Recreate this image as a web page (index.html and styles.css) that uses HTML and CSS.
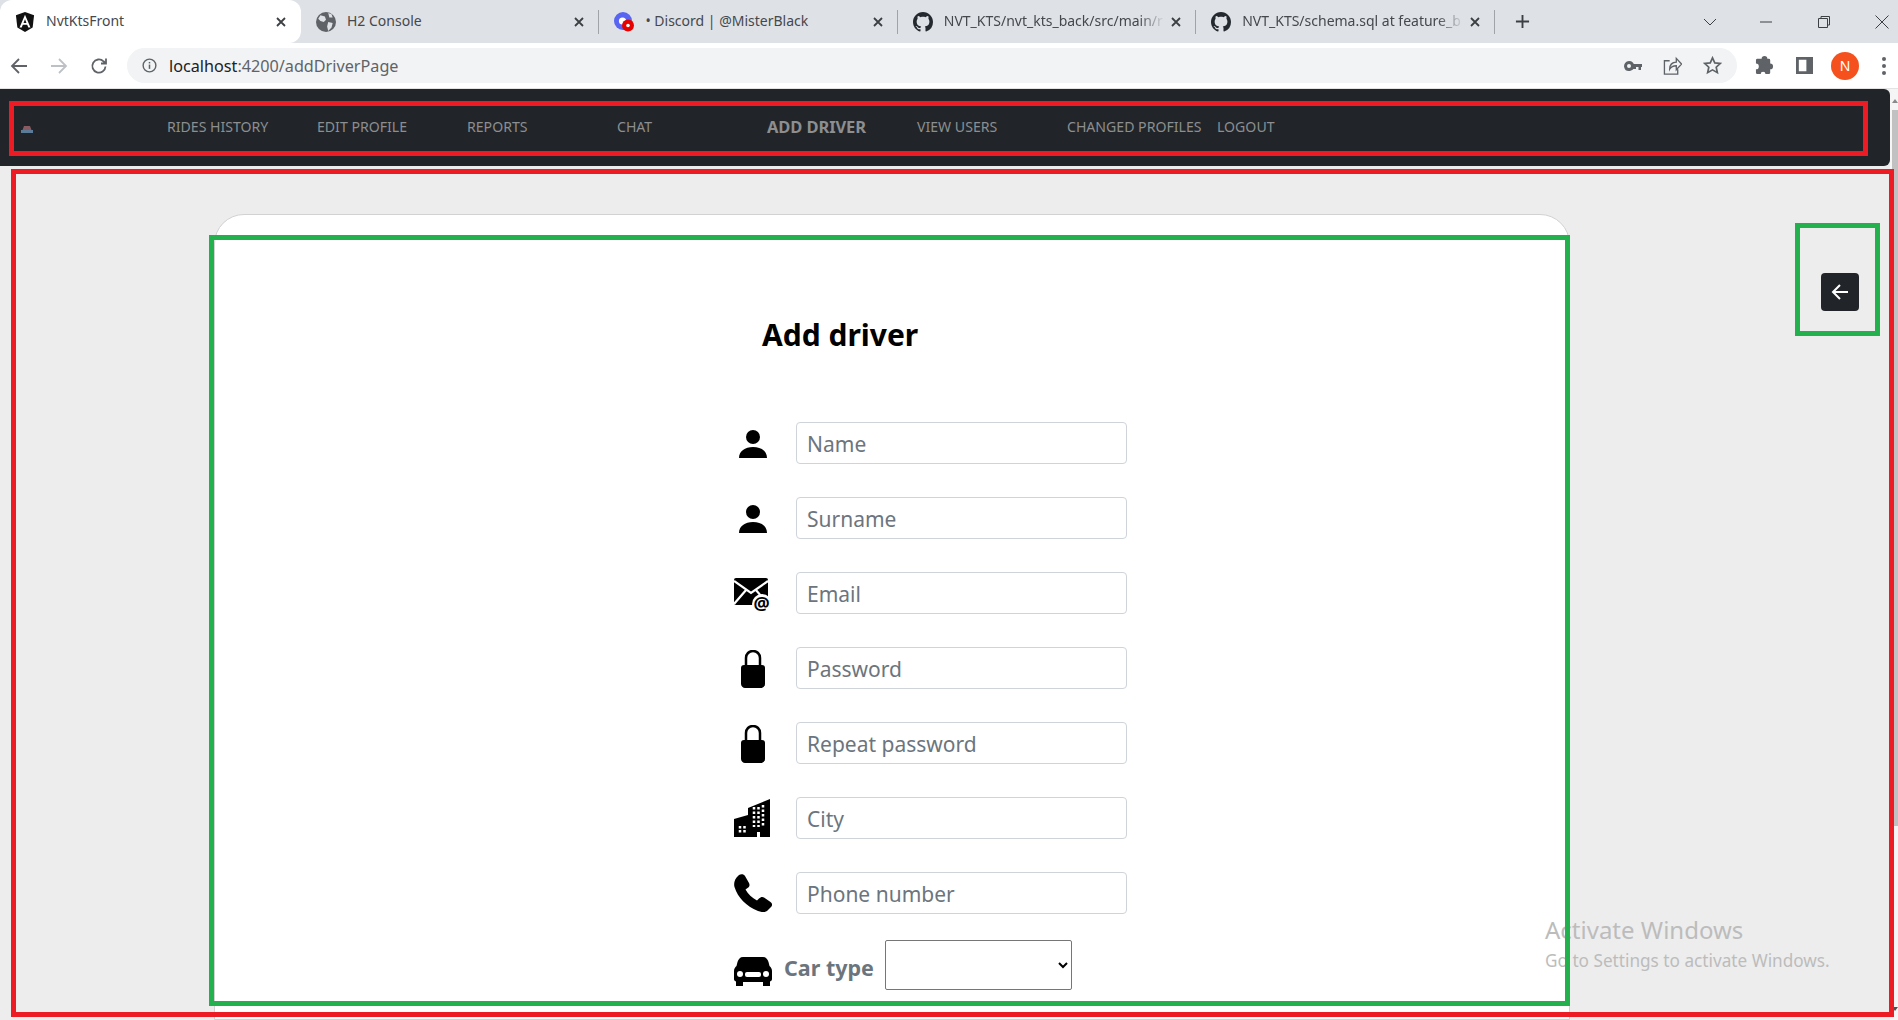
FILE: index.html
```html
<!DOCTYPE html>
<html lang="en">

<head>
    <meta charset="UTF-8">
    <title>NvtKtsFront</title>
    <link rel="stylesheet" href="styles.css">
</head>

<body>
    <!-- Browser chrome -->
    <div class="tabstrip">
        <div class="tab tab-active">
            <svg class="tab-icon" viewBox="0 0 22 22">
                <path fill="#111" d="M11 0 21 3.6 19.4 17 11 22 2.6 17 1 3.6z" />
                <path fill="#fff" d="M11 3 5 17h2.4l1.2-3h4.8l1.2 3H17zM9.4 12 11 8l1.6 4z" />
            </svg>
            <span class="tab-title">NvtKtsFront</span>
            <svg class="tab-close" viewBox="0 0 10 10"><path d="M1 1l8 8M9 1l-8 8" /></svg>
        </div>
        <div class="tab">
            <svg class="tab-icon" viewBox="0 0 18 18">
                <circle cx="9" cy="9" r="9" fill="#5f6368" />
                <path fill="#dee1e6" d="M4 3l4 1 1 3-2 2-3-1-2-2zM11 9l4 1-1 4-3 3-1-4zM11 1l3 1 1 3-3 0z" />
            </svg>
            <span class="tab-title">H2 Console</span>
            <svg class="tab-close" viewBox="0 0 10 10"><path d="M1 1l8 8M9 1l-8 8" /></svg>
        </div>
        <div class="tab">
            <svg class="tab-icon" viewBox="0 0 20 20">
                <circle cx="9" cy="9" r="9" fill="#5865f2" />
                <circle cx="8.5" cy="9" r="3.6" fill="#fff" />
                <circle cx="14" cy="13.5" r="6" fill="#e60000" />
                <circle cx="14" cy="13.5" r="1.8" fill="#fff" />
            </svg>
            <span class="tab-title">• Discord | @MisterBlack</span>
            <svg class="tab-close" viewBox="0 0 10 10"><path d="M1 1l8 8M9 1l-8 8" /></svg>
        </div>
        <div class="tab">
            <svg class="tab-icon" viewBox="0 0 16 16"><use href="#github" /></svg>
            <span class="tab-title tab-fade">NVT_KTS/nvt_kts_back/src/main/r</span>
            <svg class="tab-close" viewBox="0 0 10 10"><path d="M1 1l8 8M9 1l-8 8" /></svg>
        </div>
        <div class="tab">
            <svg class="tab-icon" viewBox="0 0 16 16"><use href="#github" /></svg>
            <span class="tab-title tab-fade">NVT_KTS/schema.sql at feature_b</span>
            <svg class="tab-close" viewBox="0 0 10 10"><path d="M1 1l8 8M9 1l-8 8" /></svg>
        </div>
        <svg class="new-tab" viewBox="0 0 16 16"><path d="M8 1v14M1 8h14" /></svg>
        <div class="window-controls">
            <svg class="win-icon win-chevron" viewBox="0 0 14 14"><path d="M1 4l6 6 6-6" /></svg>
            <svg class="win-icon" viewBox="0 0 14 14"><path d="M1 7h12" /></svg>
            <svg class="win-icon" viewBox="0 0 14 14"><path d="M1.500 3.500h9v9h-9zM4 3.500V1.500h8.500v8.500h-2" /></svg>
            <svg class="win-icon" viewBox="0 0 14 14"><path d="M0.500 0.500l13 13M13.500 0.500l-13 13" /></svg>
        </div>
    </div>

    <div class="toolbar">
        <svg class="tool-icon" viewBox="0 0 18 18"><path d="M17 9H2M9 2 2 9l7 7" /></svg>
        <svg class="tool-icon tool-off" viewBox="0 0 18 18"><path d="M1 9h15M9 2l7 7-7 7" /></svg>
        <svg class="tool-icon" viewBox="0 0 18 18"><path d="M15.500 9.500a6.600 6.600 0 1 1-2-5.200L16 6.500M16 1.500v5h-5" /></svg>
        <div class="omnibox">
            <svg class="info-icon" viewBox="0 0 16 16">
                <circle cx="8" cy="8" r="6.800" fill="none" stroke="#5f6368" stroke-width="1.500" />
                <rect x="7.200" y="7" width="1.600" height="4.600" fill="#5f6368" />
                <rect x="7.200" y="4.200" width="1.600" height="1.600" fill="#5f6368" />
            </svg>
            <span class="url"><span class="url-host">localhost</span>:4200/addDriverPage</span>
            <svg class="omni-icon key-icon" viewBox="0 0 18 12">
                <path fill="#5f6368" d="M5 1a5 5 0 1 1-4.800 6.200A5 5 0 0 1 5 1zm0 3a2 2 0 1 0 0 4 2 2 0 0 0 0-4zM9.500 4H18v3h-1v3h-2.500V7H12v2H9.500z" />
            </svg>
            <svg class="omni-icon" viewBox="0 0 20 20">
                <path fill="none" stroke="#5f6368" stroke-width="1.400" d="M7 5H1.500v14h14v-5M7 14c0-5 3-7.500 7-7.500V2.500l5.500 6-5.500 6v-4.200c-3 0-5.500 1-7 3.700z" />
            </svg>
            <svg class="omni-icon omni-last" viewBox="0 0 20 20">
                <path fill="none" stroke="#5f6368" stroke-width="1.800" d="M10 2l2.400 5.300 5.800.6-4.300 3.900 1.200 5.700L10 14.600l-5.100 2.900 1.200-5.700L1.800 7.900l5.800-.6z" />
            </svg>
        </div>
        <svg class="ext-icon" viewBox="0 0 20 20">
            <path fill="#5f6368" d="M7 3a3 3 0 0 1 6 0h1.500A1.500 1.500 0 0 1 16 4.500V8a3 3 0 0 1 0 6v3.500a1.500 1.500 0 0 1-1.500 1.500H11a2.500 2.500 0 0 0-5 0H2.500A1.500 1.500 0 0 1 1 17.500V14a3 3 0 0 0 0-6V4.500A1.500 1.500 0 0 1 2.500 3z" />
        </svg>
        <svg class="panel-icon" viewBox="0 0 18 18">
            <path fill="#5f6368" d="M0 0h18v18H0zM3 3v12h8V3z" />
        </svg>
        <div class="avatar">N</div>
        <div class="kebab"><i></i><i></i><i></i></div>
    </div>

    <!-- Page -->
    <div class="viewport">
        <div class="page">
            <nav class="navbar">
                <svg class="nav-logo" viewBox="0 0 12 8">
                    <path fill="#8a5a60" d="M3 0h6l1.500 4H1.500z" />
                    <path fill="#5b7c99" d="M0 4h12v3H0z" />
                </svg>
                <ul class="nav-links">
                    <li>RIDES HISTORY</li>
                    <li>EDIT PROFILE</li>
                    <li>REPORTS</li>
                    <li>CHAT</li>
                    <li class="nav-current">ADD DRIVER</li>
                    <li>VIEW USERS</li>
                    <li>CHANGED PROFILES</li>
                    <li class="nav-last">LOGOUT</li>
                </ul>
            </nav>

            <main class="content">
                <div class="card">
                    <h2 class="card-title">Add driver</h2>

                    <div class="field">
                        <span class="field-icon"><svg class="ic-person" viewBox="0 0 28 28"><use href="#person" /></svg></span>
                        <input type="text" placeholder="Name">
                    </div>
                    <div class="field">
                        <span class="field-icon"><svg class="ic-person" viewBox="0 0 28 28"><use href="#person" /></svg></span>
                        <input type="text" placeholder="Surname">
                    </div>
                    <div class="field">
                        <span class="field-icon">
                            <svg class="ic-mail" viewBox="0 -1 38 38">
                                <rect width="34" height="27" rx="2" />
                                <path fill="none" stroke="#fff" stroke-width="2.200" d="M0 3l17 12L34 3M0 26l12.500-14.500M34 26 21.500 11.500" />
                                <circle cx="28" cy="26" r="10" fill="#fff" />
                                <text class="mail-at" x="19.500" y="32">@</text>
                            </svg>
                        </span>
                        <input type="text" placeholder="Email">
                    </div>
                    <div class="field">
                        <span class="field-icon"><svg class="ic-lock" viewBox="0 0 24 38"><use href="#lock" /></svg></span>
                        <input type="password" placeholder="Password">
                    </div>
                    <div class="field">
                        <span class="field-icon"><svg class="ic-lock" viewBox="0 0 24 38"><use href="#lock" /></svg></span>
                        <input type="password" placeholder="Repeat password">
                    </div>
                    <div class="field">
                        <span class="field-icon">
                            <svg class="ic-city" viewBox="0 0 36 38">
                                <path d="M0 20l14-4V9L36 0v38H26v-5h-3v5H0z" />
                                <path fill="none" stroke="#fff" stroke-width="2.500" stroke-dasharray="2.500 2" d="M20 8v20M24.500 8v20M29 6v22" />
                                <path fill="none" stroke="#fff" stroke-width="2.500" stroke-dasharray="2.500 1.500" d="M6 27v7M10.500 27v7" />
                            </svg>
                        </span>
                        <input type="text" placeholder="City">
                    </div>
                    <div class="field">
                        <span class="field-icon">
                            <svg class="ic-phone" viewBox="0 0 38 38">
                                <path d="M5 1C7-.5 10 0 11 2l4 7c1 2 .5 4-1.500 5l-2 1.500C14 20 18 24 23 26.500l2-2c1.500-1.500 3.500-2 5-1l6.500 4.500c2 1.500 2 3.500.5 5l-4 4c-2 1.500-5 1.500-9 0C12 32 4 24 .5 13-.5 9 .5 5 5 1z" />
                            </svg>
                        </span>
                        <input type="text" placeholder="Phone number">
                    </div>
                    <div class="field-car">
                        <svg class="ic-car" viewBox="0 0 38 29">
                            <path d="M9 0h20c3 0 4.500 2 5.500 5l1 4c1.500 1 2.500 3 2.500 5v8c0 1-.5 2-2 2.500V29h-7v-4H9v4H2v-4.500C.5 24 0 23 0 22v-8c0-2 1-4 2.500-5l1-4C4.500 2 6 0 9 0z" />
                            <circle cx="6" cy="17" r="3" fill="#fff" />
                            <circle cx="32" cy="17" r="3" fill="#fff" />
                            <rect x="11" y="15" width="16" height="5" rx="2" fill="#fff" />
                        </svg>
                        <label class="car-label" for="carType">Car type</label>
                        <select id="carType" class="car-select"></select>
                    </div>
                </div>

                <div class="back-col">
                    <button class="back-btn" type="button">
                        <svg viewBox="0 0 20 20"><path d="M18 10H3M10 3l-7 7 7 7" /></svg>
                    </button>
                </div>
            </main>
        </div>
        <div class="scrollbar">
            <div class="scroll-up"></div>
            <div class="scroll-thumb"></div>
            <div class="scroll-down"></div>
        </div>
    </div>

    <div class="activate">
        <div class="activate-big">Activate Windows</div>
        <div class="activate-small">Go to Settings to activate Windows.</div>
    </div>

    <!-- Annotation boxes drawn over the screenshot -->
    <div class="mark mark-red mark-nav"></div>
    <div class="mark mark-red mark-main"></div>
    <div class="mark mark-green mark-card"></div>
    <div class="mark mark-green mark-back"></div>

    <svg class="defs" width="0" height="0">
        <defs>
            <path id="github" fill="#24292f" d="M8 0C3.580 0 0 3.580 0 8c0 3.540 2.290 6.530 5.470 7.590.4.070.55-.17.55-.38 0-.19-.01-.82-.01-1.490-2.010.37-2.530-.49-2.690-.94-.09-.23-.48-.94-.82-1.130-.28-.15-.68-.52-.01-.53.63-.01 1.080.58 1.230.82.72 1.210 1.870.87 2.330.66.070-.52.28-.87.51-1.070-1.780-.2-3.640-.89-3.640-3.950 0-.87.31-1.590.82-2.150-.08-.2-.36-1.020.08-2.120 0 0 .67-.21 2.200.82.64-.18 1.320-.27 2-.27.68 0 1.360.09 2 .27 1.530-1.040 2.200-.82 2.200-.82.44 1.100.16 1.920.08 2.120.51.56.82 1.270.82 2.150 0 3.070-1.870 3.750-3.650 3.950.29.25.54.73.54 1.480 0 1.070-.01 1.930-.01 2.200 0 .21.15.46.55.38A8.013 8.013 0 0 0 16 8c0-4.420-3.580-8-8-8z" />
            <g id="person">
                <circle cx="14" cy="7" r="7" />
                <path d="M0 28c0-7 6-11 14-11s14 4 14 11z" />
            </g>
            <g id="lock">
                <path d="M3 15h18c2 0 3 1 3 3v16c0 2-2 4-4 4H4c-2 0-4-2-4-4V18c0-2 1-3 3-3z" />
                <path fill="none" stroke="#000" stroke-width="2.500" d="M5 16V8c0-4 3-7 7-7s7 3 7 7v8" />
            </g>
        </defs>
    </svg>
</body>

</html>
```

FILE: styles.css
```css
/* General */
html,
body {
    margin: 0;
    height: 100%;
    overflow: hidden;
}

body {
    position: relative;
    display: flex;
    flex-direction: column;
    font-family: 'Noto Sans', 'Open Sans', sans-serif;
    background-color: #EDEDED;
}

.defs {
    position: absolute;
}

/* Tab strip */
.tabstrip {
    display: flex;
    align-items: center;
    height: 43px;
    flex: none;
    background-color: #DEE1E6;
}

.tab {
    display: flex;
    align-items: center;
    flex: none;
    box-sizing: border-box;
    width: 298.400px;
    height: 43px;
    padding-left: 15px;
}

/* separator between tabs */
.tab::after {
    content: '';
    flex: none;
    width: 1px;
    height: 24px;
    margin-left: 14px;
    background-color: #A0A3A8;
}

.tab-active {
    width: 301px;
    border-radius: 12px 12px 12px 0;
    background-color: #FFFFFF;
}

.tab-active::after {
    background-color: transparent;
}

.tab-icon {
    flex: none;
    width: 20px;
    height: 20px;
    margin-right: 11px;
}

.tab-title {
    flex: 1;
    min-width: 0;
    margin-top: -2px;
    overflow: hidden;
    white-space: nowrap;
    font-size: 14px;
    color: #45484D;
}

.tab-fade {
    -webkit-mask-image: linear-gradient(to right, #000 88%, transparent 100%);
    mask-image: linear-gradient(to right, #000 88%, transparent 100%);
}

.tab-close {
    flex: none;
    width: 10px;
    height: 10px;
    margin-left: 6px;
    stroke: #3C4043;
    stroke-width: 1.800;
    fill: none;
}

.new-tab {
    width: 15px;
    height: 15px;
    margin-left: 20px;
    stroke: #3C4043;
    stroke-width: 2;
    fill: none;
}

.window-controls {
    display: flex;
    align-items: center;
    gap: 44px;
    margin-left: auto;
    margin-right: 9px;
}

.win-icon {
    width: 14px;
    height: 14px;
    stroke: #3C4043;
    stroke-width: 1;
    fill: none;
}

.win-chevron {
    margin-left: 2px;
    margin-right: -2px;
}

/* Toolbar */
.toolbar {
    display: flex;
    align-items: center;
    flex: none;
    height: 45px;
    padding-left: 10px;
    border-bottom: 1px solid #E3E3E3;
    background-color: #FFFFFF;
}

.tool-icon {
    width: 18px;
    height: 18px;
    margin-right: 22px;
    stroke: #5F6368;
    stroke-width: 1.800;
    fill: none;
}

.tool-icon.tool-off {
    stroke: #BDC1C6;
}

.omnibox {
    display: flex;
    align-items: center;
    width: 1610px;
    height: 35px;
    margin-left: -3px;
    padding-left: 15px;
    box-sizing: border-box;
    border-radius: 18px;
    background-color: #F1F3F4;
}

.info-icon {
    width: 15px;
    height: 15px;
    margin-right: 12px;
}

.url {
    font-size: 16.200px;
    color: #5F6368;
}

.url-host {
    color: #202124;
}

.omni-icon {
    width: 19px;
    height: 19px;
    margin-right: 21px;
}

.omni-icon.omni-last {
    margin-right: 15px;
}

.key-icon {
    margin-left: auto;
    width: 18px;
    height: 12px;
}

.ext-icon {
    width: 19px;
    height: 19px;
    margin-left: 18px;
}

.panel-icon {
    width: 17px;
    height: 17px;
    margin-left: 22px;
}

.avatar {
    width: 28px;
    height: 28px;
    margin-left: 18px;
    border-radius: 50%;
    background-color: #F4511E;
    color: #FFFFFF;
    font-size: 14px;
    line-height: 28px;
    text-align: center;
}

.kebab {
    display: flex;
    flex-direction: column;
    gap: 3px;
    margin-left: 23px;
}

.kebab i {
    display: block;
    width: 4px;
    height: 4px;
    border-radius: 50%;
    background-color: #5F6368;
}

/* Page */
.viewport {
    display: flex;
    flex: 1;
    min-height: 0;
}

.page {
    flex: 1;
    min-width: 0;
}

.scrollbar {
    display: flex;
    flex-direction: column;
    flex: none;
    width: 8px;
    background-color: #F5F5F5;
}

.scroll-up {
    width: 0;
    height: 0;
    margin: 10px 0 5px 2px;
    border-left: 3px solid transparent;
    border-right: 3px solid transparent;
    border-bottom: 4px solid #8A8A8A;
}

.scroll-thumb {
    width: 6px;
    height: 716px;
    margin: 2px 0 0 2px;
    background-color: #C1C1C1;
}

.scroll-down {
    width: 0;
    height: 0;
    margin: 181px 0 0 2px;
    border-left: 3px solid transparent;
    border-right: 3px solid transparent;
    border-top: 4px solid #505050;
}

/* Navbar */
.navbar {
    display: flex;
    align-items: center;
    height: 77px;
    border-radius: 0 6px 6px 0;
    background-color: #212529;
}

.nav-logo {
    width: 12px;
    height: 8px;
    margin-left: 21px;
    margin-top: 4px;
}

.nav-links {
    display: flex;
    margin: -1px 0 0 134px;
    padding: 0;
    list-style: none;
}

.nav-links li {
    width: 150px;
    font-size: 14.100px;
    line-height: 20px;
    color: #8C8E90;
    white-space: nowrap;
}

.nav-links .nav-last {
    width: auto;
}

.nav-links .nav-current {
    font-size: 16.500px;
    font-weight: 700;
    letter-spacing: -0.1px;
}

/* Main area */
.content {
    display: flex;
    padding: 48px 0 0 214px;
}

.card {
    flex: none;
    box-sizing: border-box;
    width: 1356px;
    height: 806px;
    padding: 101px 0 0 519px;
    border: 1px solid #D2D2D2;
    border-radius: 30px 30px 0 0;
    background-color: #FFFFFF;
}

.card-title {
    margin: 0 0 68px 28px;
    font-size: 30px;
    line-height: 38px;
    font-weight: 700;
    color: #000000;
}

.field {
    display: flex;
    align-items: center;
    height: 42px;
    margin-bottom: 33px;
}

.field-icon {
    display: flex;
    justify-content: center;
    align-items: center;
    flex: none;
    width: 38px;
    margin-right: 24px;
}

.field input {
    box-sizing: border-box;
    width: 331px;
    height: 42px;
    padding: 2px 10px 0;
    border: 1px solid #CED4DA;
    border-radius: 4px;
    background-color: #FFFFFF;
    font-family: inherit;
    font-size: 21px;
}

.field input::placeholder {
    color: #6C757D;
    opacity: 1;
}

.ic-person {
    width: 28px;
    height: 28px;
    margin-top: 2px;
}

.ic-mail {
    width: 38px;
    height: 38px;
    margin-top: 6px;
}

.mail-at {
    font-family: 'Noto Sans', sans-serif;
    font-size: 18px;
    font-weight: 700;
}

.ic-lock {
    width: 24px;
    height: 38px;
    margin-top: 2px;
}

.ic-city {
    width: 36px;
    height: 38px;
    margin-right: 2px;
}

.ic-phone {
    width: 38px;
    height: 38px;
}

.field-car {
    display: flex;
    align-items: center;
    height: 50px;
    margin-top: -7px;
}

.ic-car {
    width: 38px;
    height: 29px;
    margin-top: 12px;
    margin-right: 12px;
}

.car-label {
    width: 88px;
    margin-right: 13px;
    margin-top: 4px;
    font-size: 21.500px;
    font-weight: 700;
    color: #6C757D;
    white-space: nowrap;
}

.car-select {
    width: 187px;
    height: 50px;
    border: 1px solid #767676;
    border-radius: 2px;
    background-color: #FFFFFF;
}

.back-col {
    padding: 59px 0 0 251px;
}

.back-btn {
    display: flex;
    align-items: center;
    justify-content: center;
    width: 38px;
    height: 38px;
    padding: 0;
    border: none;
    border-radius: 4px;
    background-color: #212529;
}

.back-btn svg {
    width: 20px;
    height: 20px;
    stroke: #FFFFFF;
    stroke-width: 2;
    fill: none;
}

/* Activate Windows watermark */
.activate {
    position: absolute;
    left: 1545px;
    top: 915px;
    color: #BCBCBC;
}

.activate-big {
    font-size: 24px;
    line-height: 30px;
}

.activate-small {
    font-size: 17.200px;
    line-height: 32px;
}

/* Annotation boxes */
.mark {
    position: absolute;
    box-sizing: border-box;
    border-width: 5px;
    border-style: solid;
}

.mark-red {
    border-color: #ED1C24;
}

.mark-green {
    border-color: #22B14C;
}

.mark-nav {
    left: 9px;
    top: 101px;
    width: 1859px;
    height: 55px;
}

.mark-main {
    left: 11px;
    top: 169px;
    width: 1883px;
    height: 848px;
}

.mark-card {
    left: 209px;
    top: 235px;
    width: 1361px;
    height: 771px;
}

.mark-back {
    left: 1795px;
    top: 223px;
    width: 85px;
    height: 113px;
}
```
